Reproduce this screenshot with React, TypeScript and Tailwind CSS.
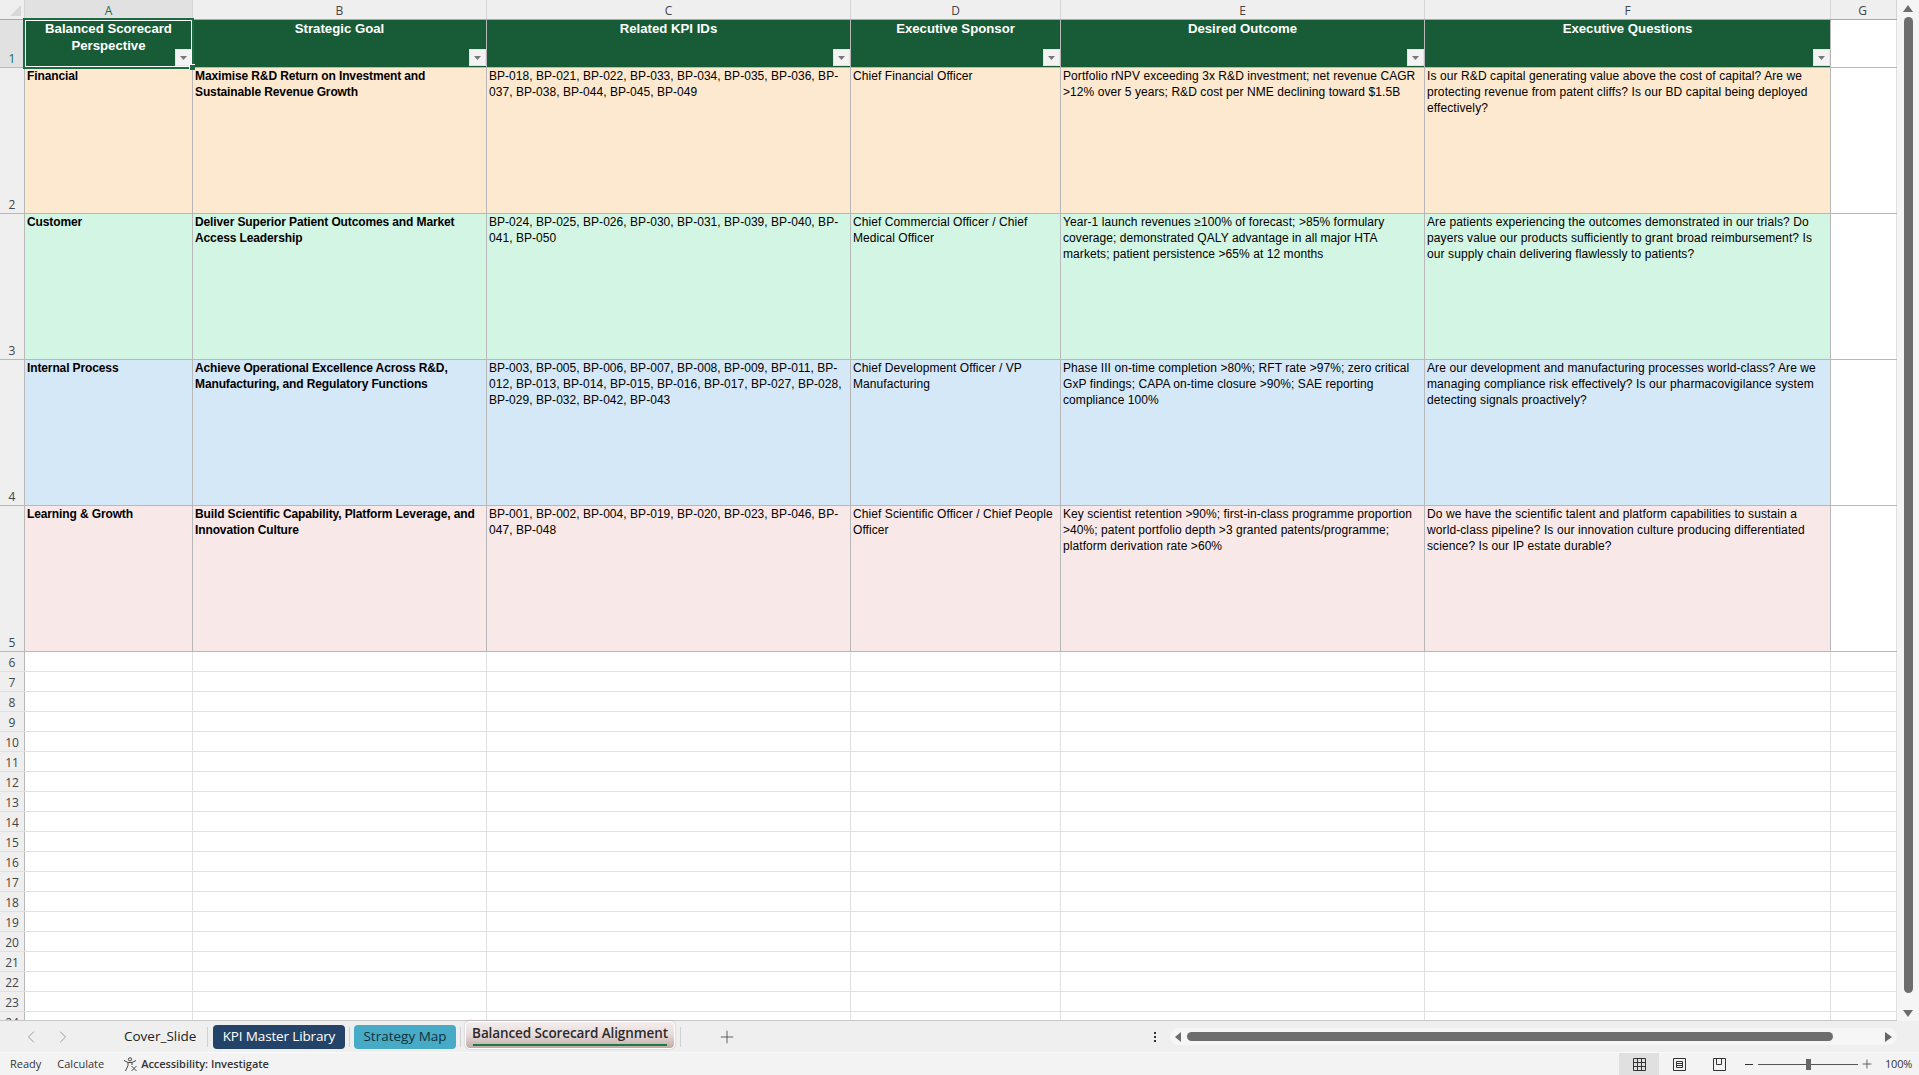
import { ChevronLeft, ChevronRight, Plus } from "lucide-react";

const columns = [
  { letter: "A", width: "w-[168px]", title: "Balanced Scorecard Perspective", tracking: "tracking-[-0.12px]" },
  { letter: "B", width: "w-[294px]", title: "Strategic Goal", tracking: "tracking-[-0.12px]" },
  { letter: "C", width: "w-[364px]", title: "Related KPI IDs", tracking: "tracking-[0.04px]" },
  { letter: "D", width: "w-[210px]", title: "Executive Sponsor", tracking: "tracking-[0.08px]" },
  { letter: "E", width: "w-[364px]", title: "Desired Outcome", tracking: "tracking-[0.07px]" },
  { letter: "F", width: "w-[406px]", title: "Executive Questions", tracking: "tracking-[0.1px]" },
];

const rows = [
  {
    number: 2,
    color: "bg-[#fce9cf]",
    cells: [
      "Financial",
      "Maximise R&D Return on Investment and Sustainable Revenue Growth",
      "BP-018, BP-021, BP-022, BP-033, BP-034, BP-035, BP-036, BP-037, BP-038, BP-044, BP-045, BP-049",
      "Chief Financial Officer",
      "Portfolio rNPV exceeding 3x R&D investment; net revenue CAGR >12% over 5 years; R&D cost per NME declining toward $1.5B",
      "Is our R&D capital generating value above the cost of capital? Are we protecting revenue from patent cliffs? Is our BD capital being deployed effectively?",
    ],
  },
  {
    number: 3,
    color: "bg-[#d3f5e3]",
    cells: [
      "Customer",
      "Deliver Superior Patient Outcomes and Market Access Leadership",
      "BP-024, BP-025, BP-026, BP-030, BP-031, BP-039, BP-040, BP-041, BP-050",
      "Chief Commercial Officer / Chief Medical Officer",
      "Year-1 launch revenues ≥100% of forecast; >85% formulary coverage; demonstrated QALY advantage in all major HTA markets; patient persistence >65% at 12 months",
      "Are patients experiencing the outcomes demonstrated in our trials? Do payers value our products sufficiently to grant broad reimbursement? Is our supply chain delivering flawlessly to patients?",
    ],
  },
  {
    number: 4,
    color: "bg-[#d5e8f7]",
    cells: [
      "Internal Process",
      "Achieve Operational Excellence Across R&D, Manufacturing, and Regulatory Functions",
      "BP-003, BP-005, BP-006, BP-007, BP-008, BP-009, BP-011, BP-012, BP-013, BP-014, BP-015, BP-016, BP-017, BP-027, BP-028, BP-029, BP-032, BP-042, BP-043",
      "Chief Development Officer / VP Manufacturing",
      "Phase III on-time completion >80%; RFT rate >97%; zero critical GxP findings; CAPA on-time closure >90%; SAE reporting compliance 100%",
      "Are our development and manufacturing processes world-class? Are we managing compliance risk effectively? Is our pharmacovigilance system detecting signals proactively?",
    ],
  },
  {
    number: 5,
    color: "bg-[#f8e9e8]",
    cells: [
      "Learning & Growth",
      "Build Scientific Capability, Platform Leverage, and Innovation Culture",
      "BP-001, BP-002, BP-004, BP-019, BP-020, BP-023, BP-046, BP-047, BP-048",
      "Chief Scientific Officer / Chief People Officer",
      "Key scientist retention >90%; first-in-class programme proportion >40%; patent portfolio depth >3 granted patents/programme; platform derivation rate >60%",
      "Do we have the scientific talent and platform capabilities to sustain a world-class pipeline? Is our innovation culture producing differentiated science? Is our IP estate durable?",
    ],
  },
];

const emptyRows = Array.from({ length: 18 }, (_, i) => i + 6);

function FilterButton() {
  return (
    <span className="absolute right-0 bottom-[1px] flex h-[17px] w-[17px] items-center justify-center border border-[#e4e4e4] bg-[#f3f3f3]">
      <svg width="7" height="4" viewBox="0 0 7 4">
        <path d="M0 0h7L3.5 4z" fill="#777" />
      </svg>
    </span>
  );
}

function ColumnHeaders() {
  return (
    <div className="flex h-[20px] border-b border-[#a8a8a8] bg-[#efefef] font-['Open_Sans',sans-serif] text-[12px] text-[#444]">
      <div className="flex w-[25px] shrink-0 items-end justify-end border-r border-[#d4d4d4] pr-[3px] pb-[3px]">
        <svg width="11" height="11" viewBox="0 0 11 11">
          <path d="M11 0v11H0z" fill="#d8d8d8" />
        </svg>
      </div>
      {columns.map((col, i) => (
        <div
          key={col.letter}
          className={`${col.width} flex shrink-0 items-center justify-center border-r border-[#d4d4d4] pt-[2px] leading-none ${i === 0 ? "bg-[#e1e1e1] text-[#1d6b41]" : ""}`}
        >
          {col.letter}
        </div>
      ))}
      <div className="flex w-[66px] shrink-0 items-center justify-center border-r border-[#d4d4d4] pt-[2px] pr-[2px] leading-none">
        G
      </div>
    </div>
  );
}

function RowNumber({ n, active }: { n: number; active?: boolean }) {
  return (
    <div
      className={`flex w-[25px] shrink-0 items-end justify-center border-r border-[#b8b8b8] font-['Open_Sans',sans-serif] text-[12px] leading-[16px] ${active ? "bg-[#e1e1e1] text-[#1d6b41]" : "bg-[#efefef] text-[#444]"}`}
    >
      {n}
    </div>
  );
}

function HeaderRow() {
  return (
    <div className="flex h-[48px] border-b border-[#b8b8b8]">
      <RowNumber n={1} active />
      {columns.map((col, i) => (
        <div
          key={col.letter}
          className={`${col.width} relative shrink-0 border-r border-[#b8b8b8] bg-[#175c36] px-[16px] text-center text-[13.2px] font-bold leading-[17px] text-white`}
        >
          {col.title}
          <FilterButton />
          {i === 0 && (
            <>
              <span className="pointer-events-none absolute inset-0 z-10 border border-white" />
              <span className="pointer-events-none absolute -top-[2px] -right-[2px] -bottom-[2px] -left-[2px] z-10 border-2 border-[#1a6b3f]" />
              <span className="absolute -right-[3px] -bottom-[3px] z-20 h-[6px] w-[6px] border-t border-l border-white bg-[#1a6b3f]" />
            </>
          )}
        </div>
      ))}
      <div className="w-[66px] shrink-0 border-r border-[#e0e0e0]" />
    </div>
  );
}

function DataRow({ row }: { row: (typeof rows)[number] }) {
  return (
    <div className="flex h-[146px] border-b border-[#b8b8b8]">
      <RowNumber n={row.number} />
      {row.cells.map((text, i) => (
        <div
          key={i}
          className={`${columns[i].width} ${columns[i].tracking} ${row.color} shrink-0 border-r border-[#b8b8b8] px-[2px] text-[12px] leading-[16px] text-black ${i < 2 ? "font-bold" : ""}`}
        >
          {text}
        </div>
      ))}
      <div className="w-[66px] shrink-0 border-r border-[#e0e0e0]" />
    </div>
  );
}

function EmptyRow({ n }: { n: number }) {
  return (
    <div className="flex h-[20px] border-b border-[#e0e0e0]">
      <RowNumber n={n} />
      {columns.map((col) => (
        <div key={col.letter} className={`${col.width} shrink-0 border-r border-[#e0e0e0]`} />
      ))}
      <div className="w-[66px] shrink-0 border-r border-[#e0e0e0]" />
    </div>
  );
}

function VerticalScrollbar() {
  return (
    <div className="flex w-[22px] shrink-0 flex-col items-center bg-[#f5f5f5] pt-[5px]">
      <svg width="10" height="7" viewBox="0 0 10 7">
        <path d="M5 0l5 7H0z" fill="#6d6d6d" />
      </svg>
      <div className="mt-[5px] h-[976px] w-[9px] rounded-full bg-[#6d6d6d]" />
      <svg className="mt-[17px]" width="10" height="7" viewBox="0 0 10 7">
        <path d="M0 0h10L5 7z" fill="#6d6d6d" />
      </svg>
    </div>
  );
}

function TabBar() {
  return (
    <div className="flex h-[31px] items-center bg-[#efefef] font-['Open_Sans',sans-serif] text-[13.5px] text-[#222]">
      <ChevronLeft className="ml-[21px] h-[20px] w-[20px] text-[#8c8c8c]" strokeWidth={1} />
      <ChevronRight className="ml-[12px] h-[20px] w-[20px] text-[#8c8c8c]" strokeWidth={1} />
      <span className="ml-[51px] w-[83px]">Cover_Slide</span>
      <span className="h-[20px] w-px bg-[#d0d0d0]" />
      <span className="ml-[5px] flex h-[24px] w-[132px] items-center justify-center rounded-[4px] bg-[#234468] tracking-[-0.15px] text-white">
        KPI Master Library
      </span>
      <span className="ml-[4px] h-[20px] w-px bg-[#d0d0d0]" />
      <span className="ml-[4px] flex h-[24px] w-[102px] items-center justify-center rounded-[4px] bg-[#47aac6] text-[#14303a]">
        Strategy Map
      </span>
      <span className="ml-[4px] h-[20px] w-px bg-[#d0d0d0]" />
      <span className="ml-[4px] -mt-[3px] flex h-[28px] w-[210px] flex-col items-center rounded-[5px] border border-white bg-gradient-to-b from-[#f5eeee] via-[#e6dad9] to-[#bfa9a6] pt-[2px] font-semibold tracking-[-0.1px] text-[#2a2a2a] shadow-[0_0_2px_rgba(0,0,0,0.25)]">
        <span className="leading-[19px]">Balanced Scorecard Alignment</span>
        <span className="mt-[1px] h-[2px] w-[194px] shrink-0 bg-[#1d7a45]" />
      </span>
      <span className="ml-[5px] h-[20px] w-px bg-[#d0d0d0]" />
      <Plus className="ml-[36px] h-[20px] w-[20px] text-[#444]" strokeWidth={1} />
      <span className="ml-[417px] flex flex-col gap-[2px]">
        <span className="h-[2px] w-[2px] bg-[#333]" />
        <span className="h-[2px] w-[2px] bg-[#333]" />
        <span className="h-[2px] w-[2px] bg-[#333]" />
      </span>
      <div className="ml-[14px] flex h-[17px] w-[727px] items-center rounded-full bg-[#f6f6f6] px-[5px]">
        <svg width="6" height="10" viewBox="0 0 6 10">
          <path d="M6 0v10L0 5z" fill="#6d6d6d" />
        </svg>
        <div className="ml-[6px] h-[9px] w-[647px] rounded-full bg-[#6d6d6d]" />
        <svg className="ml-[52px]" width="7" height="10" viewBox="0 0 7 10">
          <path d="M0 0v10l7-5z" fill="#666" />
        </svg>
      </div>
    </div>
  );
}

function StatusBar() {
  return (
    <div className="flex h-[23px] items-center border-t border-[#f9f9f9] bg-[#f3f3f3] font-['Open_Sans',sans-serif] text-[11px] text-[#333]">
      <span className="ml-[10px]">Ready</span>
      <span className="ml-[16px]">Calculate</span>
      <svg className="ml-[19px]" width="15" height="15" viewBox="0 0 15 15" fill="none" stroke="#333" strokeWidth="0.9">
        <circle cx="7" cy="2.3" r="1.6" />
        <path d="M1 3.5l4 2h4l4-2M5 5.5v3l-2.5 5.5M9 5.5v2.5M8.5 9l5 5M13.5 9l-5 5" />
      </svg>
      <span className="ml-[3px] font-semibold tracking-[-0.05px]">Accessibility: Investigate</span>
      <div className="ml-auto flex h-full w-[40px] items-center justify-center bg-[#e0e0e0]">
        <svg width="13" height="13" viewBox="0 0 13 13" fill="none" stroke="#333">
          <path d="M.5.5h12v12H.5zM.5 4.5h12M.5 8.5h12M4.5.5v12M8.5.5v12" />
        </svg>
      </div>
      <div className="flex h-full w-[40px] items-center justify-center">
        <svg width="13" height="13" viewBox="0 0 13 13" fill="none" stroke="#333">
          <path d="M.5.5h12v12H.5zM3.5 3.5h6v6h-6zM3.5 5.5h6M3.5 7.5h6" />
        </svg>
      </div>
      <div className="flex h-full w-[40px] items-center justify-center">
        <svg width="13" height="13" viewBox="0 0 13 13" fill="none" stroke="#333">
          <path d="M.5.5h12v12H.5zM3.5.5v6h5v-6" />
        </svg>
      </div>
      <span className="ml-[6px] h-px w-[8px] bg-[#333]" />
      <div className="relative ml-[5px] h-px w-[100px] bg-[#555]">
        <span className="absolute top-[-5px] left-[48px] h-[11px] w-[5px] bg-[#666]" />
      </div>
      <Plus className="ml-[2px] h-[14px] w-[14px] text-[#333]" strokeWidth={1.25} />
      <span className="ml-[11px] mr-[8px] w-[26px] whitespace-nowrap tracking-[-0.2px]">100%</span>
    </div>
  );
}

export default function App() {
  return (
    <div className="flex h-[1075px] w-[1919px] flex-col overflow-hidden bg-white font-['Liberation_Sans',Arial,sans-serif]">
      <div className="flex h-[1021px] shrink-0">
        <div className="h-full w-[1897px] shrink-0 overflow-hidden border-b border-[#c8c8c8]">
          <ColumnHeaders />
          <HeaderRow />
          {rows.map((row) => (
            <DataRow key={row.number} row={row} />
          ))}
          {emptyRows.map((n) => (
            <EmptyRow key={n} n={n} />
          ))}
          <EmptyRow n={24} />
        </div>
        <VerticalScrollbar />
      </div>
      <TabBar />
      <StatusBar />
    </div>
  );
}
